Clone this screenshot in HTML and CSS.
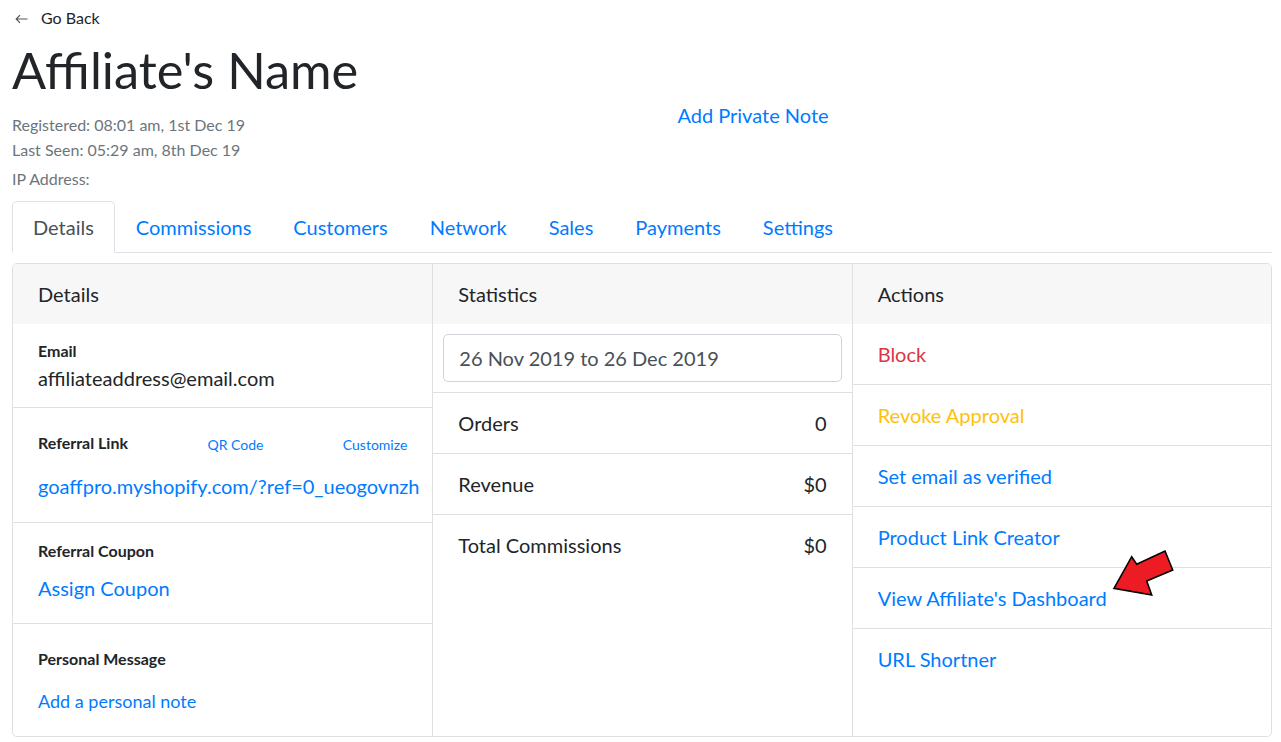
FILE: index.html
```html
<!DOCTYPE html>
<html lang="en">
<head>
<meta charset="utf-8">
<title>Affiliate's Name</title>
<link rel="stylesheet" href="styles.css">
</head>
<body>
<div class="page">
  <a class="back" href="#">
    <svg class="back-icon" width="13" height="10" viewBox="0 0 13 10"><path d="M12.5 5H1.2M5 1.2L1.2 5 5 8.8" fill="none" stroke="#555" stroke-width="1.2"/></svg>
    <span>Go Back</span>
  </a>
  <h1 class="title">Affiliate's Name</h1>
  <div class="meta-row">
    <div class="meta">
      <div class="meta-line">Registered: 08:01 am, 1st Dec 19</div>
      <div class="meta-line">Last Seen: 05:29 am, 8th Dec 19</div>
      <div class="meta-line ip">IP Address:</div>
    </div>
    <div class="note-col"><a href="#" class="link">Add Private Note</a></div>
  </div>

  <nav class="tabs">
    <a href="#" class="tab active">Details</a>
    <a href="#" class="tab">Commissions</a>
    <a href="#" class="tab">Customers</a>
    <a href="#" class="tab">Network</a>
    <a href="#" class="tab">Sales</a>
    <a href="#" class="tab">Payments</a>
    <a href="#" class="tab">Settings</a>
  </nav>

  <div class="card">
    <section class="col">
      <div class="col-header">Details</div>
      <div class="item item-email">
        <div class="label">Email</div>
        <div class="value">affiliateaddress@email.com</div>
      </div>
      <div class="item item-ref">
        <div class="label-row">
          <span class="label">Referral Link</span>
          <a href="#" class="small-link">QR Code</a>
          <a href="#" class="small-link">Customize</a>
        </div>
        <a href="#" class="link ref-link">goaffpro.myshopify.com/?ref=0_ueogovnzh</a>
      </div>
      <div class="item item-coupon">
        <div class="label">Referral Coupon</div>
        <a href="#" class="link coupon-link">Assign Coupon</a>
      </div>
      <div class="item item-message">
        <div class="label">Personal Message</div>
        <a href="#" class="link note-link">Add a personal note</a>
      </div>
    </section>

    <section class="col">
      <div class="col-header">Statistics</div>
      <div class="date-wrap">
        <div class="date-input">26 Nov 2019 to 26 Dec 2019</div>
      </div>
      <div class="stat"><span>Orders</span><span>0</span></div>
      <div class="stat"><span>Revenue</span><span>$0</span></div>
      <div class="stat last"><span>Total Commissions</span><span>$0</span></div>
    </section>

    <section class="col">
      <div class="col-header">Actions</div>
      <a href="#" class="action danger">Block</a>
      <a href="#" class="action warning">Revoke Approval</a>
      <a href="#" class="action">Set email as verified</a>
      <a href="#" class="action">Product Link Creator</a>
      <a href="#" class="action">View Affiliate's Dashboard</a>
      <a href="#" class="action last">URL Shortner</a>
    </section>
  </div>

  <svg class="pointer" width="75" height="55" viewBox="0 0 75 55">
    <polygon points="9,43.3 26.7,11.7 31.7,19.3 60,6 67.7,25 41.7,36 46.7,50" fill="#ed1c24" stroke="#000" stroke-width="1.6" stroke-linejoin="miter"/>
  </svg>
</div>
</body>
</html>
```

FILE: styles.css
```css
* { box-sizing: border-box; }

html, body {
  margin: 0;
  padding: 0;
  background: #fff;
}

body {
  font-family: Lato, "Liberation Sans", sans-serif;
  color: #212529;
  font-size: 20px;
  line-height: 1.5;
}

a { text-decoration: none; }

.page {
  position: relative;
  padding: 6px 9px 0 12px;
}

.back {
  display: flex;
  align-items: center;
  height: 24px;
  font-size: 16px;
  color: #212529;
}

.back-icon {
  margin: 1px 13px 0 3px;
}

.title {
  margin: 10px 0 0 0;
  font-size: 50.5px;
  font-weight: 400;
  line-height: 60px;
  letter-spacing: 0;
}

.meta-row {
  display: flex;
  align-items: flex-start;
}

.meta {
  flex: none;
  width: 222px;
  padding-top: 12px;
  color: #6c757d;
  font-size: 16px;
  line-height: 25px;
  white-space: nowrap;
}

.meta-line.ip {
  margin-top: 4px;
}

.note-col {
  flex: 1;
  text-align: center;
  line-height: 30px;
}

.link { color: #007bff; }

/* Tabs */
.tabs {
  display: flex;
  margin-top: 10px;
  border-bottom: 1px solid #dee2e6;
}

.tab {
  display: block;
  padding: 10px 20px;
  margin-bottom: -1px;
  border: 1px solid transparent;
  border-radius: 5px 5px 0 0;
  color: #007bff;
  line-height: 30px;
}

.tab.active {
  color: #495057;
  background: #fff;
  border-color: #dee2e6 #dee2e6 #fff;
}

/* Card */
.card {
  display: grid;
  grid-template-columns: repeat(3, minmax(0, 1fr));
  margin-top: 10px;
  border: 1px solid #dfdfdf;
  border-radius: 5px;
  overflow: hidden;
}

.col {
  display: flex;
  flex-direction: column;
  border-left: 1px solid #dfdfdf;
  min-width: 0;
}

.col:first-child { border-left: none; }

.col-header {
  background: #f7f7f7;
  padding: 15px 25px;
  line-height: 30px;
}

.item {
  padding: 15px 25px;
  border-bottom: 1px solid #dfdfdf;
}

.label {
  font-size: 16px;
  font-weight: 700;
  line-height: 24px;
}

.value { line-height: 30px; font-size: 20px; }

.item-email { padding-bottom: 14px; }

.item-ref { padding-bottom: 21px; }

.label-row {
  display: flex;
  justify-content: space-between;
  align-items: center;
  height: 40px;
}

.small-link {
  color: #007bff;
  font-size: 14px;
  line-height: 20px;
  padding-top: 4px;
}

.ref-link {
  display: block;
  margin-top: 8px;
  line-height: 30px;
  white-space: nowrap;
}

.item-coupon {
  padding-top: 16px;
  padding-bottom: 20px;
}

.coupon-link {
  display: block;
  margin-top: 10px;
  line-height: 30px;
}

.item-message {
  flex: 1;
  padding-top: 23px;
  padding-bottom: 20px;
  border-bottom: none;
}

.note-link {
  display: block;
  margin-top: 15px;
  font-size: 18px;
  line-height: 30px;
}

/* Statistics */
.date-wrap {
  padding: 10px;
  border-bottom: 1px solid #dfdfdf;
}

.date-input {
  height: 48px;
  padding: 8px 15px;
  border: 1px solid #ced4da;
  border-radius: 5px;
  color: #495057;
  line-height: 30px;
}

.stat {
  display: flex;
  justify-content: space-between;
  padding: 15px 25px;
  line-height: 30px;
  border-bottom: 1px solid #dfdfdf;
}

.stat.last { border-bottom: none; }

/* Actions */
.action {
  display: block;
  padding: 15px 25px;
  line-height: 30px;
  color: #007bff;
  border-bottom: 1px solid #dfdfdf;
}

.action.last { border-bottom: none; }

.action.danger { color: #dc3545; }
.action.warning { color: #ffc107; }

/* Annotation arrow overlay */
.pointer {
  position: absolute;
  left: 1105px;
  top: 545px;
}
```
